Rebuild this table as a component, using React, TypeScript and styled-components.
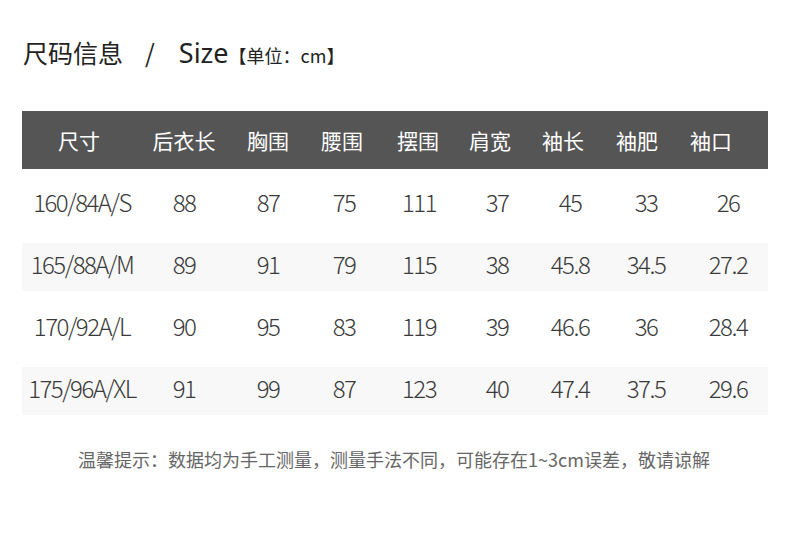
import React from "react";
import styled, { createGlobalStyle } from "styled-components";

const Global = createGlobalStyle`
  html, body { margin: 0; padding: 0; background: #ffffff; }
  body { font-family: "Noto Sans CJK SC", "Noto Sans", sans-serif; }
`;

const Page = styled.div`
  width: 790px;
  height: 543px;
  box-sizing: border-box;
  padding: 0 22px 0 22px;
  background: #fff;
`;

const Title = styled.h1`
  margin: 0;
  height: 111px;
  box-sizing: border-box;
  padding-top: 34px;
  display: flex;
  align-items: baseline;
  font-weight: 400;
  color: #222;
  line-height: 36px;
`;

const TitleCn = styled.span`
  font-size: 25px;
  padding-left: 1px;
`;

const Slash = styled.span`
  font-size: 25px;
  margin: 0 24px 0 22px;
`;

const TitleEn = styled.span`
  font-size: 27px;
  font-family: "Noto Sans", sans-serif;
`;

const Unit = styled.span`
  font-size: 18px;
`;

const HeaderBar = styled.div<{ $cols: string }>`
  display: grid;
  grid-template-columns: ${(p) => p.$cols};
  height: 58px;
  align-items: center;
  background: #555555;
  color: #ffffff;
  font-size: 21px;
  font-weight: 400;
`;

const Body = styled.div`
  display: flex;
  flex-direction: column;
  gap: 14px;
  margin-top: 12px;
`;

const Row = styled.div<{ $cols: string; $striped: boolean }>`
  display: grid;
  grid-template-columns: ${(p) => p.$cols};
  height: 48px;
  box-sizing: border-box;
  padding-bottom: 8px;
  align-items: center;
  background: ${(p) => (p.$striped ? "#f8f8f8" : "transparent")};
  color: #3a3a3a;
  font-size: 24px;
  font-weight: 300;
  letter-spacing: -1.5px;
`;

const Cell = styled.div`
  text-align: center;
  white-space: nowrap;
`;

const Note = styled.p`
  margin: 32px 0 0 0;
  text-align: center;
  font-size: 18px;
  color: #666;
  line-height: 24px;
  padding-left: 0;
  padding-right: 2px;
`;

const headCols = "114px 96px 72px 76px 76px 68px 78px 70px 78px 1fr";
const rowCols = "120px 84px 84px 68px 82px 74px 72px 80px 84px 1fr";

const headers = ["尺寸", "后衣长", "胸围", "腰围", "摆围", "肩宽", "袖长", "袖肥", "袖口"];
const rows = [
  ["160/84A/S", "88", "87", "75", "111", "37", "45", "33", "26"],
  ["165/88A/M", "89", "91", "79", "115", "38", "45.8", "34.5", "27.2"],
  ["170/92A/L", "90", "95", "83", "119", "39", "46.6", "36", "28.4"],
  ["175/96A/XL", "91", "99", "87", "123", "40", "47.4", "37.5", "29.6"],
];

export default function App() {
  return (
    <>
      <Global />
      <Page>
        <Title>
          <TitleCn>尺码信息</TitleCn>
          <Slash>/</Slash>
          <TitleEn>Size</TitleEn>
          <Unit>【单位：cm】</Unit>
        </Title>
        <HeaderBar $cols={headCols}>
          {headers.map((h) => (
            <Cell key={h}>{h}</Cell>
          ))}
          <div />
        </HeaderBar>
        <Body>
          {rows.map((r, i) => (
            <Row key={r[0]} $cols={rowCols} $striped={i % 2 === 1}>
              {r.map((c, j) => (
                <Cell key={j}>{c}</Cell>
              ))}
              <div />
            </Row>
          ))}
        </Body>
        <Note>温馨提示：数据均为手工测量，测量手法不同，可能存在1~3cm误差，敬请谅解</Note>
      </Page>
    </>
  );
}
